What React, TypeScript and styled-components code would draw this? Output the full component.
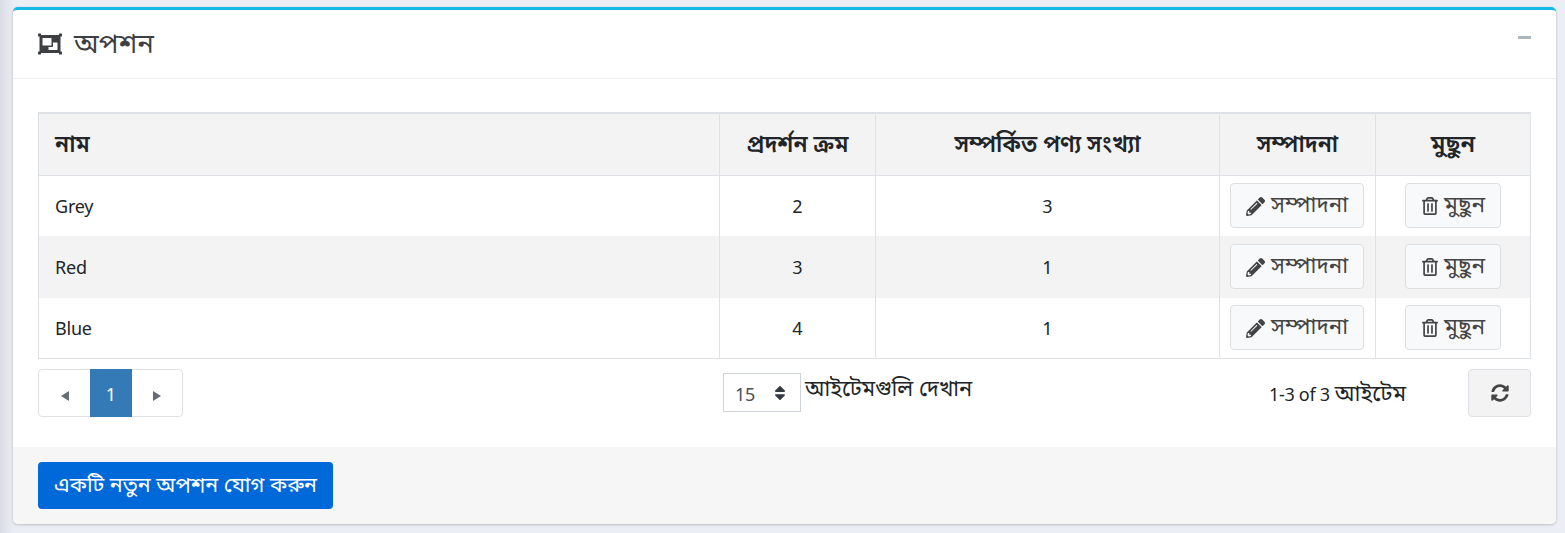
import React from 'react';
import styled, { createGlobalStyle } from 'styled-components';
import { FaObjectGroup, FaPencilAlt, FaRegTrashAlt, FaSyncAlt, FaMinus, FaSort } from 'react-icons/fa';

const GlobalStyle = createGlobalStyle`
  * { box-sizing: border-box; }
  body {
    margin: 0;
    height: 533px;
    overflow: hidden;
    background: linear-gradient(90deg, #d9dce4 0, #e9ecf2 13px, #ebeef4 20px);
    color: #212529;
    font: 18px/24px "Noto Sans", "Noto Sans Bengali", sans-serif;
  }
  button { font: inherit; color: inherit; margin: 0; cursor: pointer; }
`;

const Card = styled.section`
  width: 1543px;
  height: 517px;
  margin: 7px 0 0 13px;
  display: flex;
  flex-direction: column;
  background: #fff;
  border-top: 3px solid #12bae6;
  border-radius: 5px;
  box-shadow: 0 0 1px rgba(0, 0, 0, 0.13), 0 1px 3px rgba(0, 0, 0, 0.2);
  overflow: hidden;
`;

const Header = styled.header`
  height: 69px;
  flex: none;
  display: flex;
  justify-content: space-between;
  padding: 0 24px 0 25px;
  border-bottom: 1px solid #efefef;
`;

const Title = styled.h3`
  display: flex;
  align-items: center;
  gap: 12px;
  margin: 0;
  font-weight: 400;
  color: #3d3f42;
`;

const Collapse = styled.button`
  height: 16px;
  margin-top: 20px;
  padding: 0;
  border: 0;
  background: none;
  color: #adb5bd;
  display: flex;
  svg { display: block; }
`;

const Body = styled.div`
  flex: 1;
  padding: 33px 25px 0;
`;

const Table = styled.div`
  border: 1px solid #dee2e6;
  border-top-width: 2px;
`;

const rowHeight = { head: 62, odd: 60, even: 62 };

const Row = styled.div<{ $kind: 'head' | 'odd' | 'even' }>`
  display: grid;
  grid-template-columns: 681px 156px 344px 156px 1fr;
  height: ${p => rowHeight[p.$kind]}px;
  background: ${p => (p.$kind === 'odd' ? '#fff' : '#f3f3f3')};
  border-bottom: ${p => (p.$kind === 'head' ? '1px solid #dee2e6' : '0')};
  font-weight: ${p => (p.$kind === 'head' ? 600 : 400)};
`;

const Cell = styled.div<{ $left?: boolean; $action?: boolean }>`
  display: flex;
  align-items: center;
  justify-content: ${p => (p.$left ? 'flex-start' : 'center')};
  padding: ${p => (p.$left ? '0 16px' : p.$action ? '0 1px 1px 0' : '0')};
  border-right: 1px solid #dee2e6;
  white-space: nowrap;
  &:last-child { border-right: 0; padding-right: 0; }
`;

const Text = styled.span<{ $spacing?: number }>`
  letter-spacing: ${p => p.$spacing ?? 0}px;
  white-space: nowrap;
`;

const Bengali = styled.span<{ $size?: number; $lift?: number }>`
  font-size: ${p => p.$size ?? 22}px;
  line-height: 24px;
  padding-bottom: ${p => p.$lift ?? 4}px;
  white-space: nowrap;
`;

const ActionButton = styled.button<{ $w: number }>`
  width: ${p => p.$w}px;
  height: 45px;
  padding: 0 15px;
  display: flex;
  align-items: center;
  gap: ${p => (p.$w > 100 ? 6 : 5)}px;
  color: #444;
  background: #f8f9fa;
  border: 1px solid #dcdfe2;
  border-radius: 4px;
  svg { flex: none; margin-top: 1px; }
`;

const Controls = styled.div`
  display: grid;
  grid-template-columns: 685px 1fr 199px 63px;
  height: 48px;
  margin-top: 10px;
`;

const Pager = styled.nav`
  display: flex;
  width: 145px;
  height: 48px;
  border: 1px solid #dee2e6;
  border-radius: 4px;
`;

const PageButton = styled.button<{ $active?: boolean }>`
  flex: ${p => (p.$active ? '0 0 42px' : '1')};
  margin: ${p => (p.$active ? '-1px 0' : '0')};
  display: flex;
  align-items: center;
  justify-content: center;
  padding: ${p => (p.$active ? '2px' : '5px')} 0 0 1px;
  border: 0;
  color: ${p => (p.$active ? '#fff' : '#666c73')};
  background: ${p => (p.$active ? '#337ab7' : 'transparent')};
`;

const PageSize = styled.div`
  display: flex;
  gap: 4px;
  padding-top: 4px;
`;

const PageSizeLabel = styled.div`
  padding-top: 3px;
`;

const Select = styled.div`
  width: 78px;
  height: 39px;
  padding: 3px 11px 0 11px;
  display: flex;
  align-items: center;
  justify-content: space-between;
  border: 1px solid #ced4da;
  color: #495057;
  svg { color: #343a40; margin-bottom: 2px; }
`;

const Info = styled.div`
  display: flex;
  align-items: center;
  gap: 5px;
  padding-top: 2px;
`;

const Refresh = styled.button`
  display: flex;
  align-items: center;
  justify-content: center;
  background: #f3f3f3;
  border: 1px solid #dee2e6;
  border-radius: 4px;
  color: #444;
`;

const Footer = styled.footer`
  height: 77px;
  flex: none;
  padding: 15px 25px;
  background: #f6f6f7;
`;

const Primary = styled.button`
  width: 295px;
  height: 47px;
  padding: 0 16px;
  display: flex;
  align-items: center;
  color: #fff;
  background: #0069d9;
  border: 0;
  border-radius: 4px;
`;

const options = [
  { name: 'Grey', order: 2, products: 3 },
  { name: 'Red', order: 3, products: 1 },
  { name: 'Blue', order: 4, products: 1 },
];

export default function App() {
  return (
    <>
      <GlobalStyle />
      <Card>
        <Header>
          <Title><FaObjectGroup size={24} /><Bengali $size={27.6}>অপশন</Bengali></Title>
          <Collapse aria-label="Collapse"><FaMinus size={15} /></Collapse>
        </Header>
        <Body>
          <Table>
            <Row $kind="head">
              <Cell $left><Bengali $size={23} $lift={4}>নাম</Bengali></Cell>
              <Cell><Bengali $size={23} $lift={4}>প্রদর্শন ক্রম</Bengali></Cell>
              <Cell><Bengali $size={23} $lift={4}>সম্পর্কিত পণ্য সংখ্যা</Bengali></Cell>
              <Cell><Bengali $size={23} $lift={4}>সম্পাদনা</Bengali></Cell>
              <Cell><Bengali $size={23.8} $lift={4}>মুছুন</Bengali></Cell>
            </Row>
            {options.map((o, i) => (
              <Row key={o.name} $kind={i % 2 ? 'even' : 'odd'}>
                <Cell $left><Text $spacing={-0.2}>{o.name}</Text></Cell>
                <Cell><Text>{o.order}</Text></Cell>
                <Cell><Text>{o.products}</Text></Cell>
                <Cell $action><ActionButton $w={134}><FaPencilAlt size={19} /><Bengali $size={22.3}>সম্পাদনা</Bengali></ActionButton></Cell>
                <Cell $action><ActionButton $w={96}><FaRegTrashAlt size={18} /><Bengali $size={22.6}>মুছুন</Bengali></ActionButton></Cell>
              </Row>
            ))}
          </Table>
          <Controls>
            <Pager>
              <PageButton aria-label="Previous"><svg width="8" height="10"><path d="M8 0V10L0 5Z" fill="currentColor" /></svg></PageButton>
              <PageButton $active>1</PageButton>
              <PageButton aria-label="Next"><svg width="8" height="10"><path d="M0 0V10L8 5Z" fill="currentColor" /></svg></PageButton>
            </Pager>
            <PageSize>
              <Select><Text $spacing={-0.3}>15</Text><FaSort size={18} /></Select>
              <PageSizeLabel><Bengali $size={21.8}>আইটেমগুলি দেখান</Bengali></PageSizeLabel>
            </PageSize>
            <Info><Text $spacing={-0.3}>1-3 of 3</Text><Bengali $size={22.2} $lift={3}>আইটেম</Bengali></Info>
            <Refresh aria-label="Refresh"><FaSyncAlt size={18} /></Refresh>
          </Controls>
        </Body>
        <Footer><Primary><Bengali $size={21.4}>একটি নতুন অপশন যোগ করুন</Bengali></Primary></Footer>
      </Card>
    </>
  );
}
